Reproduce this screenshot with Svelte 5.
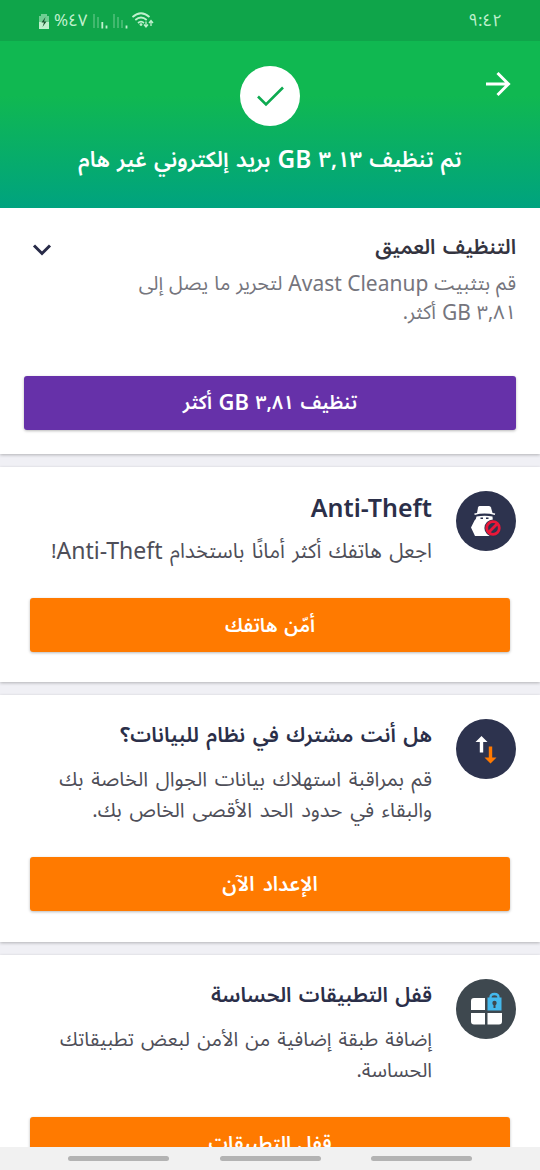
<script lang="ts">
	type Card = {
		id: string;
		title: string;
		lines: string[];
		action: string;
	};

	const cards: Card[] = [
		{
			id: 'theft',
			title: 'Anti-Theft',
			lines: ['اجعل هاتفك أكثر أمانًا باستخدام Anti-Theft!'],
			action: 'أمّن هاتفك'
		},
		{
			id: 'data',
			title: 'هل أنت مشترك في نظام للبيانات؟',
			lines: ['قم بمراقبة استهلاك بيانات الجوال الخاصة بك', 'والبقاء في حدود الحد الأقصى الخاص بك.'],
			action: 'الإعداد الآن'
		},
		{
			id: 'lock',
			title: 'قفل التطبيقات الحساسة',
			lines: ['إضافة طبقة إضافية من الأمن لبعض تطبيقاتك', 'الحساسة.'],
			action: 'قفل التطبيقات'
		}
	];

	// Latin runs are set a little larger than the Arabic around them
	const split = (text: string) => text.split(/([A-Za-z]+(?:[ -][A-Za-z]+)*)/);
</script>

{#snippet mixed(text: string)}{#each split(text) as part, i}{#if i % 2}<span class="latin">{part}</span>{:else}{part}{/if}{/each}{/snippet}

<div class="screen" dir="rtl">
	<header>
		<div class="status-bar">
			<span class="time">٩:٤٢</span>
			<div class="status-icons">
				<svg class="wifi" width="22" height="20" viewBox="0 0 22 20">
					<g fill="none" stroke="currentColor" stroke-width="1.7">
						<path d="M.5 6Q9 -1.500 17.500 6" />
						<path d="M3.300 9Q9 4 14.700 9" />
						<path d="M6 12Q9 9.400 12 12" />
					</g>
					<circle cx="9" cy="13.600" r="1.400" fill="currentColor" />
					<path d="M14 10.500v5M12 13.500l2 2.500 2-2.500M19 15v-5M17 12l2-2.500 2 2.500" fill="none" stroke="currentColor" stroke-width="1.300" />
				</svg>
				<svg class="signal" width="15" height="17" viewBox="0 0 15 17">
					<path d="M1 1v14M5 4v11M9 7v8" stroke="currentColor" stroke-width="1.4" opacity=".4" />
					<path d="M13.500 12.500v3" stroke="currentColor" stroke-width="1.8" />
				</svg>
				<svg class="signal" width="15" height="17" viewBox="0 0 15 17">
					<path d="M1 1v14M5 4v11" stroke="currentColor" stroke-width="1.4" opacity=".4" />
					<path d="M9.300 9v6.500M13.500 12.500v3" stroke="currentColor" stroke-width="1.8" />
				</svg>
				<span class="percent">٤٧%</span>
				<svg width="12" height="17" viewBox="0 0 12 17">
					<path d="M3 1h6v2h2v13H1V3h2z" fill="currentColor" opacity=".55" />
					<path d="M1 9h10v7H1z" fill="currentColor" />
					<path d="M7.500 4L3.500 9.500h2.500L4.500 14l4-5.500H6z" fill="#17502c" />
				</svg>
			</div>
		</div>
		<div class="hero">
			<svg class="back" width="26" height="26" viewBox="0 0 26 26" fill="none" stroke="#fff" stroke-width="3">
				<path d="M1 13h22M12.500 2L23.500 13l-11 11" />
			</svg>
			<div class="check">
				<svg width="30" height="24" viewBox="0 0 30 24" fill="none" stroke="#0daa50" stroke-width="2.600">
					<path d="M3 12.500l8 8L28 3.500" />
				</svg>
			</div>
			<h1>{@render mixed('تم تنظيف ٣,١٣ GB بريد إلكتروني غير هام')}</h1>
		</div>
	</header>

	<main>
		<section class="cleanup">
			<div class="cleanup-head">
				<h2>التنظيف العميق</h2>
				<svg width="20" height="14" viewBox="0 0 20 14" fill="none" stroke="#282b48" stroke-width="3">
					<path d="M2 2.500l8 8 8-8" />
				</svg>
			</div>
			<p>
				<span class="line">{@render mixed('قم بتثبيت Avast Cleanup لتحرير ما يصل إلى')}</span>
				<span class="line">{@render mixed('٣,٨١ GB أكثر.')}</span>
			</p>
			<button class="purple"><span>{@render mixed('تنظيف ٣,٨١ GB أكثر')}</span></button>
		</section>

		{#each cards as card (card.id)}
			<section class="card {card.id}">
				<div class="row">
					<div class="badge">
						{#if card.id === 'theft'}
							<svg width="60" height="60" viewBox="0 0 60 60">
								<path d="M23.500 15h9.500q1.500 0 2 1.500l1.500 5.500H21l1-5.500q.3-1.500 1.500-1.500z" fill="#fff" />
								<path d="M18.500 23.300q10-3 20.500 0" fill="none" stroke="#fff" stroke-width="1.600" />
								<path d="M20.500 25.500q8.500-1.500 16 0l.5 5.500 3 7v7H19l-4-8.500 3.500-7q1.500-.5 2-4z" fill="#fff" />
								<path d="M24.500 27.200h2.500M30 27.200h2.500" stroke="#2d334e" stroke-width="1.400" />
								<circle cx="37" cy="37" r="8.600" fill="#2d334e" />
								<circle cx="37" cy="37" r="6.300" fill="none" stroke="#ea1738" stroke-width="2.800" />
								<path d="M33 41l8-8" stroke="#ea1738" stroke-width="2.800" />
							</svg>
						{:else if card.id === 'data'}
							<svg width="60" height="60" viewBox="0 0 60 60">
								<path d="M25.500 17l6 6h-4.300v10.500h-3.400V23h-4.300z" fill="#fff" />
								<path d="M34.500 44.500l-6-6h4.300V27.500h3.400v11h4.300z" fill="#ff7900" />
							</svg>
						{:else}
							<svg width="60" height="60" viewBox="0 0 60 60">
								<path d="M18 19h11v12H15V22q0-3 3-3zM15 34h14v11.500H18q-3 0-3-3zM31.500 34H46v8.500q0 3-3 3H31.500z" fill="#fff" />
								<path d="M34.500 20v-1.500q0-3.500 4-3.500t4 3.500V20" fill="none" stroke="#44b8ec" stroke-width="2.300" />
								<rect x="31.500" y="18.500" width="14" height="13" fill="#44b8ec" />
								<circle cx="38.500" cy="24" r="2.200" fill="#3e484f" />
								<path d="M38.500 24v5" stroke="#3e484f" stroke-width="2" />
							</svg>
						{/if}
					</div>
					<div class="text">
						<h3>{card.title}</h3>
						<p>
							{#each card.lines as line}
								<span class="line">{@render mixed(line)}</span>
							{/each}
						</p>
					</div>
				</div>
				<button>{card.action}</button>
			</section>
		{/each}
	</main>

	<nav>
		<i></i>
		<i></i>
		<i></i>
	</nav>
</div>

<style>
	:global(body) {
		margin: 0;
		overflow: hidden;
	}

	.screen {
		width: 540px;
		height: 1170px;
		display: flex;
		flex-direction: column;
		overflow: hidden;
		background: #f0f0f5;
		font-family: 'Noto Sans', 'Noto Sans Arabic', 'DejaVu Sans', sans-serif;
	}

	header {
		height: 207.5px;
		flex: none;
		background: linear-gradient(#10b851 0, #10b851 46%, #00a37f 100%);
	}

	.status-bar {
		height: 41px;
		box-sizing: border-box;
		padding: 0 38px;
		display: flex;
		align-items: center;
		justify-content: space-between;
		background: #0fa54a;
		color: #bff0cd;
		font-size: 17px;
	}

	.status-icons {
		display: flex;
		align-items: center;
		gap: 5px;
		padding-top: 1px;
	}

	.wifi,
	.percent {
		margin-left: -1px;
	}

	.hero {
		position: relative;
		display: flex;
		flex-direction: column;
		align-items: center;
		padding-top: 24.5px;
	}

	.back {
		position: absolute;
		top: 30px;
		right: 29px;
	}

	.check {
		width: 60px;
		height: 60px;
		border-radius: 50%;
		background: #fff;
		display: flex;
		align-items: center;
		justify-content: center;
	}

	h1,
	h2,
	h3,
	p {
		margin: 0;
		white-space: nowrap;
	}

	h1 {
		margin-top: 16px;
		color: #fff;
		font-size: 21.8px;
		line-height: 34px;
		font-weight: 600;
		word-spacing: 1.5px;
	}

	.latin {
		position: relative;
		top: 1px;
		font-size: 1.06em;
		line-height: 1;
		word-spacing: 0;
	}

	h1 .latin,
	.theft .latin {
		font-size: 1.12em;
	}

	.purple .latin {
		font-size: 1.14em;
	}

	main {
		flex: 1;
		min-height: 0;
		overflow: hidden;
		display: flex;
		flex-direction: column;
		gap: 13px;
	}

	section {
		flex: none;
		box-sizing: border-box;
		background: #fff;
		box-shadow: 0 1px 3px rgba(0, 0, 0, 0.26);
	}

	.cleanup {
		height: 246.5px;
		padding: 24px 24px 0;
	}

	.cleanup-head {
		display: flex;
		justify-content: space-between;
		height: 36px;
		padding-left: 8px;
	}

	.cleanup-head svg {
		margin-top: 11px;
	}

	h2 {
		margin-top: -2px;
		font-size: 20.6px;
		line-height: 32px;
		font-weight: 600;
		word-spacing: 2px;
		color: #343440;
	}

	.line {
		display: block;
	}

	.cleanup p {
		height: 108px;
		font-size: 19.8px;
		line-height: 29px;
		word-spacing: 0.8px;
		color: #75757d;
	}

	button {
		display: block;
		width: 100%;
		height: 54px;
		padding: 0;
		border: 0;
		border-radius: 3px;
		background: #ff7a00;
		box-shadow: 0 1px 3px rgba(0, 0, 0, 0.28);
		color: #fff;
		font-family: inherit;
		font-size: 19.3px;
		font-weight: 600;
		word-spacing: 1.5px;
	}

	.data button {
		font-size: 20.2px;
		word-spacing: 3px;
	}

	.purple {
		background: #6631a9;
	}

	.card {
		height: 246.5px;
		padding: 24px 24px 0;
	}

	.card.theft {
		height: 215px;
	}

	.row {
		display: flex;
		gap: 24px;
		height: 138px;
	}

	.theft .row {
		height: 107px;
	}

	.badge {
		flex: none;
		width: 60px;
		height: 60px;
		border-radius: 50%;
		background: #2d334e;
	}

	.lock .badge {
		background: #3e484f;
	}

	h3 {
		font-size: 20.8px;
		line-height: 31px;
		font-weight: 600;
		word-spacing: 2px;
		color: #2b2f49;
	}

	.theft h3 {
		font-size: 25px;
		line-height: 33px;
	}

	.text p {
		margin-top: 13px;
		font-size: 20.2px;
		line-height: 31px;
		word-spacing: 2.5px;
		color: #4e4e58;
	}

	.theft .text p {
		margin-top: 11px;
		font-size: 20.6px;
		word-spacing: 2px;
	}

	.lock .text p {
		font-size: 19.8px;
		word-spacing: 2px;
	}

	.card button {
		width: 480px;
		margin: 0 auto;
	}

	nav {
		height: 23px;
		flex: none;
		box-sizing: border-box;
		padding: 0 68px;
		display: flex;
		align-items: center;
		justify-content: space-between;
		background: #f1f1f1;
	}

	nav i {
		width: 101px;
		height: 5px;
		border-radius: 3px;
		background: #b3b3b3;
	}
</style>
